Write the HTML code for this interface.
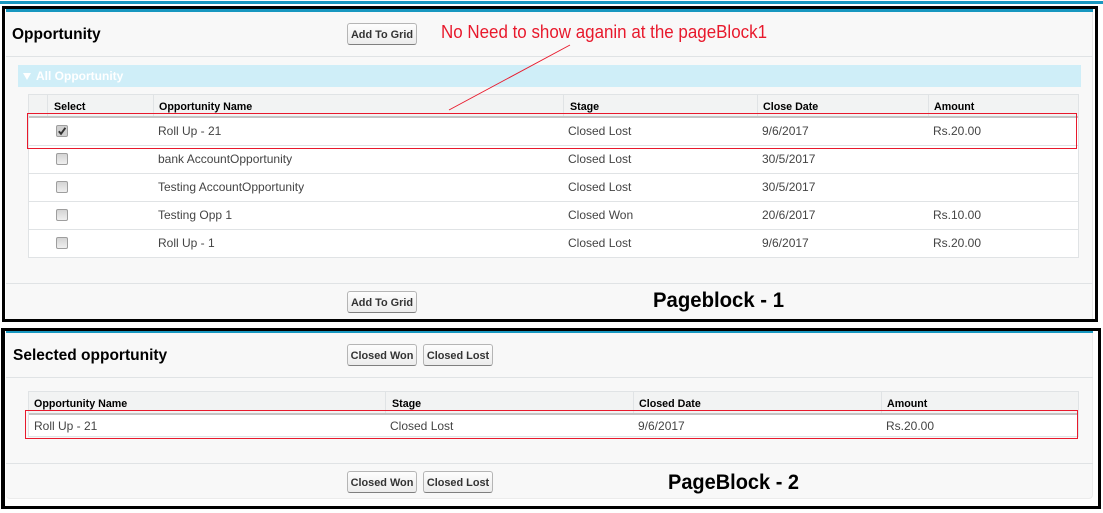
<!DOCTYPE html>
<html>
<head>
<meta charset="utf-8">
<style>
html,body{margin:0;padding:0;background:#fff}
body{position:relative;width:1103px;height:513px;overflow:hidden;font-family:"Liberation Sans",Arial,sans-serif;color:#333}
div,span{position:absolute;box-sizing:border-box}
.k{background:#000}
.t{white-space:nowrap;font-size:12px;line-height:14px;color:#444}
.h{white-space:nowrap;font-size:10.7px;line-height:14px;font-weight:bold;color:#000}
.ti{white-space:nowrap;font-size:15.5px;line-height:20px;font-weight:bold;color:#000}
.b{height:22px;border:1px solid #b5b5b5;border-bottom-color:#7f7f7f;border-radius:3px;background:linear-gradient(#fdfdfd,#ececec);font-size:10.9px;font-weight:bold;line-height:22px;text-align:center;color:#333;white-space:nowrap}
.l{background:#e0e3e5}
.c{width:12px;height:12px;border:1px solid #9e9e9e;border-radius:2px;background:linear-gradient(#d4d4d4,#efefef)}
.r{border:1px solid #e8192c}
</style>
</head>
<body>
<!-- top strip -->
<div style="left:0;top:1px;width:1103px;height:3px;background:#1797c0"></div>

<!-- Block 1 frame -->
<div class="k" style="left:2px;top:6px;width:1096px;height:316px"></div>
<div style="left:5px;top:9px;width:1090px;height:310px;background:#fff"></div>
<div style="left:6px;top:9px;width:1087px;height:310px;background:#f8f8f8;border-right:1px solid #e6e6e6"></div>
<div style="left:6px;top:9px;width:1087px;height:3px;background:#1797c0"></div>
<div class="l" style="left:6px;top:56px;width:1087px;height:1px"></div>
<div class="l" style="left:6px;top:283px;width:1087px;height:1px"></div>

<div class="ti" style="left:12px;top:25px">Opportunity</div>
<div class="b" style="left:347px;top:23px;width:70px">Add To Grid</div>

<div style="left:18px;top:65px;width:1063px;height:22px;background:#cfeef8"></div>
<div style="left:23px;top:73px;width:0;height:0;border-left:4.5px solid transparent;border-right:4.5px solid transparent;border-top:7px solid #fff"></div>
<div style="left:36px;top:68px;white-space:nowrap;font-size:12px;line-height:16px;font-weight:bold;color:#fff">All Opportunity</div>

<!-- Table 1 -->
<div style="left:28px;top:94px;width:1051px;height:164px;background:#fff;border:1px solid #e0e3e5"></div>
<div style="left:29px;top:95px;width:1049px;height:21px;background:#f2f3f3"></div>
<div style="left:29px;top:116px;width:1049px;height:2px;background:#c4c4c4"></div>
<div class="l" style="left:47px;top:95px;width:1px;height:21px"></div>
<div class="l" style="left:153px;top:95px;width:1px;height:21px"></div>
<div class="l" style="left:563px;top:95px;width:1px;height:21px"></div>
<div class="l" style="left:757px;top:95px;width:1px;height:21px"></div>
<div class="l" style="left:928px;top:95px;width:1px;height:21px"></div>
<div class="l" style="left:29px;top:145px;width:1049px;height:1px"></div>
<div class="l" style="left:29px;top:173px;width:1049px;height:1px"></div>
<div class="l" style="left:29px;top:201px;width:1049px;height:1px"></div>
<div class="l" style="left:29px;top:229px;width:1049px;height:1px"></div>

<div class="h" style="left:54px;top:100px">Select</div>
<div class="h" style="left:159px;top:100px">Opportunity Name</div>
<div class="h" style="left:570px;top:100px">Stage</div>
<div class="h" style="left:763px;top:100px">Close Date</div>
<div class="h" style="left:934px;top:100px">Amount</div>

<div class="c" style="left:56px;top:125px;background:#d0d0d0"></div>
<svg style="position:absolute;left:56px;top:125px" width="12" height="12" viewBox="0 0 12 12"><path d="M2.8 6.3 L5 8.8 L9.4 2.8" fill="none" stroke="#333" stroke-width="1.9"/></svg>
<div class="t" style="left:158px;top:124px">Roll Up - 21</div>
<div class="t" style="left:568px;top:124px">Closed Lost</div>
<div class="t" style="left:762px;top:124px">9/6/2017</div>
<div class="t" style="left:933px;top:124px">Rs.20.00</div>

<div class="c" style="left:56px;top:153px"></div>
<div class="t" style="left:158px;top:152px">bank AccountOpportunity</div>
<div class="t" style="left:568px;top:152px">Closed Lost</div>
<div class="t" style="left:762px;top:152px">30/5/2017</div>

<div class="c" style="left:56px;top:181px"></div>
<div class="t" style="left:158px;top:180px">Testing AccountOpportunity</div>
<div class="t" style="left:568px;top:180px">Closed Lost</div>
<div class="t" style="left:762px;top:180px">30/5/2017</div>

<div class="c" style="left:56px;top:209px"></div>
<div class="t" style="left:158px;top:208px">Testing Opp 1</div>
<div class="t" style="left:568px;top:208px">Closed Won</div>
<div class="t" style="left:762px;top:208px">20/6/2017</div>
<div class="t" style="left:933px;top:208px">Rs.10.00</div>

<div class="c" style="left:56px;top:237px"></div>
<div class="t" style="left:158px;top:236px">Roll Up - 1</div>
<div class="t" style="left:568px;top:236px">Closed Lost</div>
<div class="t" style="left:762px;top:236px">9/6/2017</div>
<div class="t" style="left:933px;top:236px">Rs.20.00</div>

<div class="r" style="left:27px;top:113px;width:1050px;height:36px"></div>
<div class="b" style="left:347px;top:291px;width:70px">Add To Grid</div>

<!-- Block 2 frame -->
<div class="k" style="left:1px;top:328px;width:1100px;height:181px"></div>
<div style="left:5px;top:331px;width:1093px;height:175px;background:#fff"></div>
<div style="left:6px;top:331px;width:1087px;height:168px;background:#f8f8f8;border:1px solid #ececec;border-top:0;border-left:0;border-radius:0 0 4px 4px"></div>
<div style="left:6px;top:331px;width:1087px;height:2px;background:#1797c0"></div>
<div class="l" style="left:6px;top:377px;width:1087px;height:1px"></div>
<div class="l" style="left:6px;top:463px;width:1087px;height:1px"></div>

<div class="ti" style="left:13px;top:346px">Selected opportunity</div>
<div class="b" style="left:347px;top:344px;width:70px">Closed Won</div>
<div class="b" style="left:423px;top:344px;width:70px">Closed Lost</div>

<!-- Table 2 -->
<div style="left:28px;top:391px;width:1051px;height:46px;background:#fff;border:1px solid #e0e3e5"></div>
<div style="left:29px;top:392px;width:1049px;height:21px;background:#f2f3f3"></div>
<div style="left:29px;top:413px;width:1049px;height:2px;background:#c4c4c4"></div>
<div class="l" style="left:385px;top:392px;width:1px;height:21px"></div>
<div class="l" style="left:633px;top:392px;width:1px;height:21px"></div>
<div class="l" style="left:881px;top:392px;width:1px;height:21px"></div>

<div class="h" style="left:34px;top:397px">Opportunity Name</div>
<div class="h" style="left:392px;top:397px">Stage</div>
<div class="h" style="left:639px;top:397px">Closed Date</div>
<div class="h" style="left:887px;top:397px">Amount</div>

<div class="t" style="left:34px;top:419px">Roll Up - 21</div>
<div class="t" style="left:390px;top:419px">Closed Lost</div>
<div class="t" style="left:638px;top:419px">9/6/2017</div>
<div class="t" style="left:886px;top:419px">Rs.20.00</div>

<div class="r" style="left:25px;top:410px;width:1053px;height:29px"></div>

<div class="b" style="left:347px;top:471px;width:70px">Closed Won</div>
<div class="b" style="left:423px;top:471px;width:70px">Closed Lost</div>

<!-- Annotations -->
<svg style="position:absolute;left:0;top:0" width="1103" height="513" viewBox="0 0 1103 513">
<line x1="449" y1="110" x2="570" y2="45" stroke="#e8192c" stroke-width="0.9"/>
<text x="441" y="38" font-family="Liberation Sans, sans-serif" font-size="18.5" fill="#e8192c" textLength="326" lengthAdjust="spacingAndGlyphs">No Need to show aganin at the pageBlock1</text>
<text x="653" y="307" font-family="Liberation Sans, sans-serif" font-size="21.5" font-weight="bold" fill="#000" textLength="131" lengthAdjust="spacingAndGlyphs">Pageblock - 1</text>
<text x="668" y="489" font-family="Liberation Sans, sans-serif" font-size="21.5" font-weight="bold" fill="#000" textLength="131" lengthAdjust="spacingAndGlyphs">PageBlock - 2</text>
</svg>
</body>
</html>
